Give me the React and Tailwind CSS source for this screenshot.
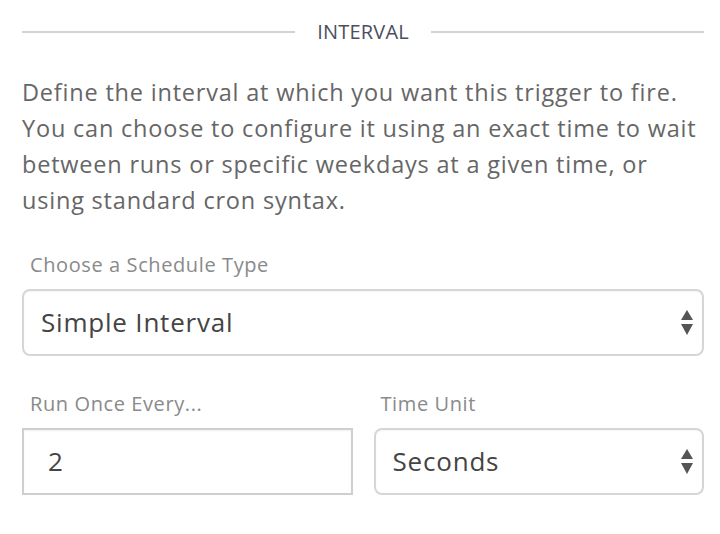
import React from 'react';

const font = { fontFamily: '"Open Sans", "Noto Sans", sans-serif' };

const Arrows = () => (
  <svg width="12" height="25" viewBox="0 0 12 25" className="shrink-0">
    <path d="M6 0 L12 10 L0 10 Z" fill="#555" />
    <path d="M0 14 L12 14 L6 25 Z" fill="#555" />
  </svg>
);

const SelectBox = ({ value }) => (
  <div className="flex h-[67px] items-center justify-between rounded-[8px] border-2 border-[#d6d6d6] bg-white pl-[17px] pr-[9px] text-[26px] tracking-[0.8px] text-[#444] shadow-[inset_0_1px_2px_rgba(0,0,0,0.04)]">
    <span>{value}</span>
    <Arrows />
  </div>
);

const Label = ({ children, className = '' }) => (
  <div className={`text-[20px] leading-[24px] tracking-[0.6px] text-[#8a8a8a] ${className}`}>{children}</div>
);

export default function App() {
  return (
    <div className="w-[720px] h-[534px] bg-white pl-[22px] pr-[16px] pt-[20px]" style={font}>
      <div className="flex items-center gap-[22px]">
        <div className="h-[2px] flex-1 bg-[#d3d3d3]" />
        <span className="text-[20px] leading-[24px] tracking-[0.2px] text-[#4b4f5b]">INTERVAL</span>
        <div className="h-[2px] flex-1 bg-[#d3d3d3]" />
      </div>

      <p className="mt-[30px] text-[23.5px] leading-[36px] tracking-[0.8px] text-[#666]">
        Define the interval at which you want this trigger to fire. You can choose to configure it using an exact time to wait between runs or specific weekdays at a given time, or using standard cron syntax.
      </p>

      <div className="mt-[35px]">
        <Label className="pl-[8px]">Choose a Schedule Type</Label>
        <div className="mt-[12px]">
          <SelectBox value="Simple Interval" />
        </div>
      </div>

      <div className="mt-[36px] grid grid-cols-2 gap-[21px]">
        <div>
          <Label className="pl-[8px]">Run Once Every...</Label>
          <div className="mt-[12px] flex h-[67px] items-center border-2 border-[#cfcfcf] bg-white pl-[24px] text-[26px] text-[#444] shadow-[inset_0_1px_2px_rgba(0,0,0,0.06)]">
            2
          </div>
        </div>
        <div>
          <Label className="pl-[7px]">Time Unit</Label>
          <div className="mt-[12px]">
            <SelectBox value="Seconds" />
          </div>
        </div>
      </div>
    </div>
  );
}
